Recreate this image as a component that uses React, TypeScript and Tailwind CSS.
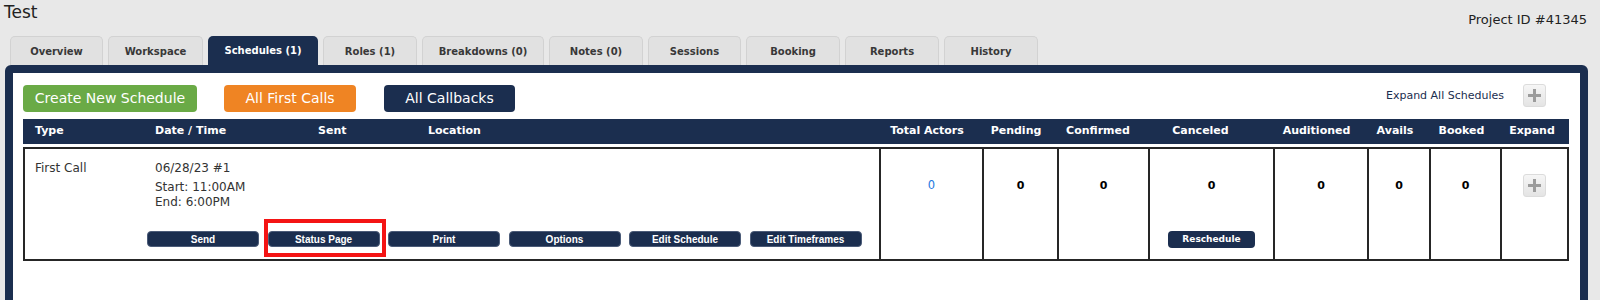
import React from "react";

const tabs = [
  { label: "Overview", w: "w-[93px]" },
  { label: "Workspace", w: "w-[95px]" },
  { label: "Schedules (1)", w: "w-[110px]", active: true },
  { label: "Roles (1)", w: "w-[94px]" },
  { label: "Breakdowns (0)", w: "w-[122px]" },
  { label: "Notes (0)", w: "w-[94px]" },
  { label: "Sessions", w: "w-[93px]" },
  { label: "Booking", w: "w-[94px]" },
  { label: "Reports", w: "w-[94px]" },
  { label: "History", w: "w-[94px]" },
];

// header labels for the count columns; pr nudges them to where the original sits
const countCols = [
  { label: "Total Actors", pr: "pr-[7px]" },
  { label: "Pending", pr: "pr-[7px]" },
  { label: "Confirmed", pr: "pr-[9px]" },
  { label: "Canceled", pr: "pr-[20px]" },
  { label: "Auditioned", pr: "pr-[7px]" },
  { label: "Avails", pr: "pr-[6px]" },
  { label: "Booked", pr: "pr-[6px]" },
  { label: "Expand", pr: "pr-[5px]" },
];

const actions = ["Send", "Status Page", "Print", "Options", "Edit Schedule", "Edit Timeframes"];

function PlusButton() {
  return (
    <div className="flex h-[23px] w-[23px] items-center justify-center rounded-[3px] border border-[#dcdcdc] bg-gradient-to-b from-[#f6f6f6] to-[#e4e4e4]">
      <svg width="13" height="13" viewBox="0 0 13 13">
        <rect x="5" y="0" width="3" height="13" fill="#9c9c9c" />
        <rect x="0" y="5" width="13" height="3" fill="#9c9c9c" />
      </svg>
    </div>
  );
}

function ActionButton({ label }: { label: string }) {
  return (
    <div className="flex h-[16px] w-[112px] items-center justify-center rounded-[4px] border border-[#4b5b78] bg-[#1b2e4f] font-['Liberation_Sans',Arial,sans-serif] text-[10px] font-bold text-white">
      {label}
    </div>
  );
}

export default function App() {
  return (
    <div className="min-h-screen bg-[#e8e8e8] font-['DejaVu_Sans',sans-serif] text-[#222]">
      <div className="flex h-[36px] justify-between">
        <h1 className="pl-[4px] pt-[2px] text-[17px] font-normal leading-[20px]">Test</h1>
        <div className="mt-[12px] pr-[13px] text-[13px] leading-[16px]">Project ID #41345</div>
      </div>

      <div className="flex h-[29px] gap-[5px] pl-[10px]">
        {tabs.map((t) =>
          t.active ? (
            <div
              key={t.label}
              className={`${t.w} flex items-center justify-center rounded-t-[5px] bg-[#1b2e4f] text-[10px] font-bold text-white`}
            >
              {t.label}
            </div>
          ) : (
            <div
              key={t.label}
              className={`${t.w} flex items-center justify-center rounded-t-[5px] border border-b-0 border-[#d2d2d2] bg-[#e1e1e1] text-[10px] font-bold text-[#383838]`}
            >
              {t.label}
            </div>
          )
        )}
      </div>

      <div className="ml-[5px] h-[260px] w-[1583px] rounded-[6px] border-[8px] border-[#1b2e4f] bg-white pl-[10px] pr-[11px] pt-[12px]">
        <div className="flex h-[27px] items-start">
          <div className="flex h-[27px] w-[174px] items-center justify-center rounded-[4px] bg-[#6aaa46] text-[14px] text-white">
            Create New Schedule
          </div>
          <div className="ml-[27px] flex h-[27px] w-[132px] items-center justify-center rounded-[4px] bg-[#ef8423] text-[14px] text-white">
            All First Calls
          </div>
          <div className="ml-[28px] flex h-[27px] w-[131px] items-center justify-center rounded-[4px] bg-[#1b2e4f] text-[14px] text-white">
            All Callbacks
          </div>
          <div className="ml-auto mr-[23px] mt-[-1px] flex items-center gap-[19px]">
            <span className="text-[11px] leading-[15px] text-[#1b2e4f]">Expand All Schedules</span>
            <PlusButton />
          </div>
        </div>

        <div className="mt-[7px] grid h-[25px] grid-cols-[856px_103px_75px_91px_125px_94px_62px_71px_1fr] items-center bg-[#1b2e4f] text-[11px] font-bold text-white">
          <div className="flex">
            <div className="w-[132px] pl-[12px]">Type</div>
            <div className="w-[163px]">Date / Time</div>
            <div className="w-[110px]">Sent</div>
            <div>Location</div>
          </div>
          {countCols.map((c) => (
            <div key={c.label} className={`text-center ${c.pr}`}>
              {c.label}
            </div>
          ))}
        </div>

        <div className="mt-[3px] grid h-[114px] grid-cols-[854px_103px_75px_91px_125px_94px_62px_71px_1fr] border-2 border-[#262626]">
          <div className="flex flex-col">
            <div className="flex pt-[12px] text-[12px] leading-[15px] text-[#333]">
              <div className="w-[130px] pl-[10px]">First Call</div>
              <div>
                <div>06/28/23 #1</div>
                <div className="mt-[4px]">Start: 11:00AM</div>
                <div>End: 6:00PM</div>
              </div>
            </div>
            <div className="mb-[12px] mt-auto flex gap-[8.5px] pl-[122px]">
              {actions.map((a) =>
                a === "Status Page" ? (
                  <div key={a} className="relative">
                    <ActionButton label={a} />
                    <div className="absolute -bottom-[10px] -left-[4px] -right-[6px] -top-[12px] border-[4px] border-[#f41414]" />
                  </div>
                ) : (
                  <ActionButton key={a} label={a} />
                )
              )}
            </div>
          </div>

          <div className="border-l-2 border-[#262626] pt-[29px] text-center text-[11.5px] leading-[15px] text-[#2479e0]">0</div>
          <div className="border-l-2 border-[#262626] pt-[29px] text-center text-[11px] font-bold leading-[15px] text-black">0</div>
          <div className="border-l-2 border-[#262626] pt-[29px] text-center text-[11px] font-bold leading-[15px] text-black">0</div>
          <div className="flex flex-col items-center border-l-2 border-[#262626] pt-[29px]">
            <div className="text-[11px] font-bold leading-[15px] text-black">0</div>
            <div className="mb-[11px] mt-auto flex h-[17px] w-[87px] items-center justify-center rounded-[4px] bg-[#1b2e4f] text-[9px] font-bold text-white">
              Reschedule
            </div>
          </div>
          <div className="border-l-2 border-[#262626] pt-[29px] text-center text-[11px] font-bold leading-[15px] text-black">0</div>
          <div className="border-l-2 border-[#262626] pt-[29px] text-center text-[11px] font-bold leading-[15px] text-black">0</div>
          <div className="border-l-2 border-[#262626] pt-[29px] text-center text-[11px] font-bold leading-[15px] text-black">0</div>
          <div className="flex justify-center border-l-2 border-[#262626] pt-[25px]">
            <PlusButton />
          </div>
        </div>
      </div>
    </div>
  );
}
